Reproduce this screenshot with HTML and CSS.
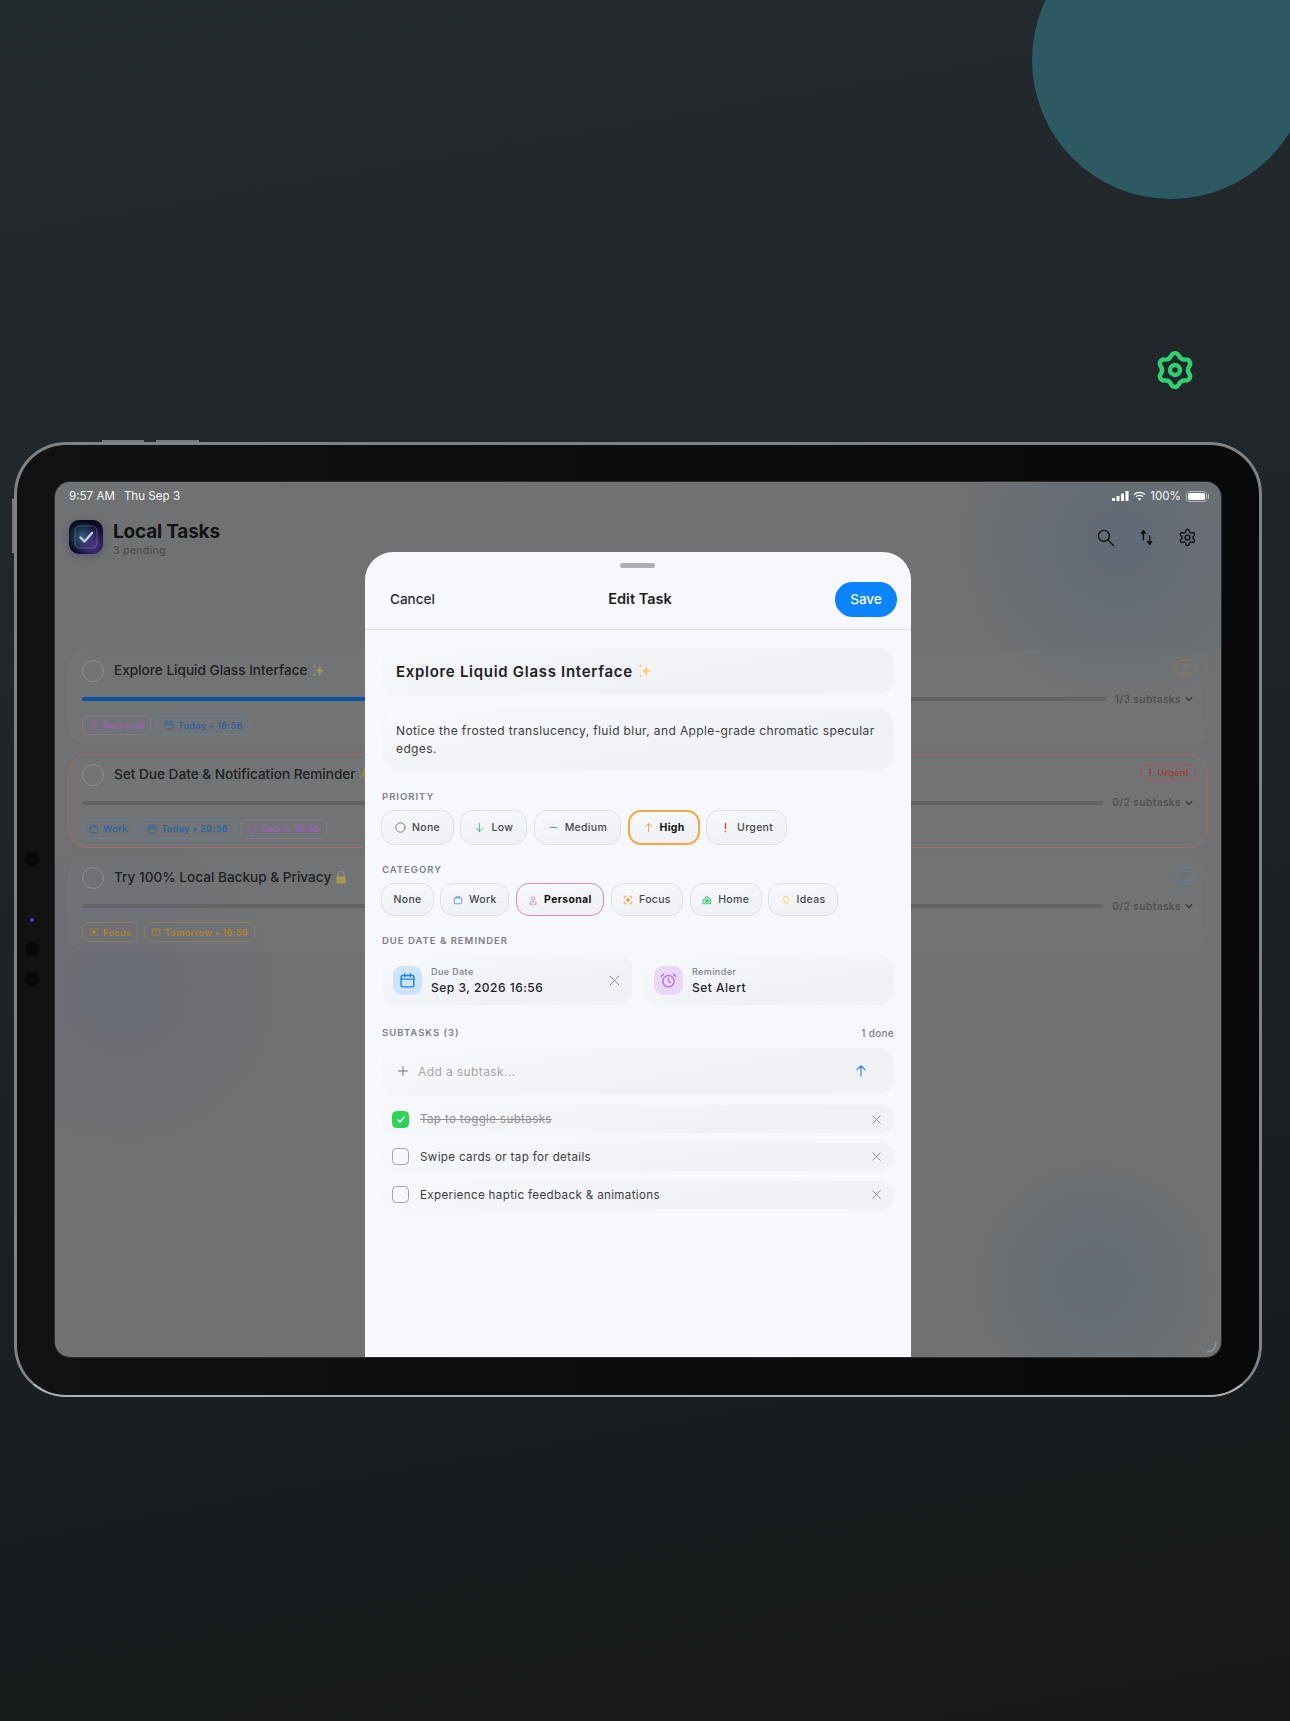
FILE: index.html
```html
<!DOCTYPE html>
<html lang="en">
<head>
    <meta charset="UTF-8">
    <meta name="viewport" content="width=device-width, initial-scale=1.0">
    <title>Local Tasks</title>
    <link rel="stylesheet" href="styles.css">
</head>
<body>
    <svg class="sprite" xmlns="http://www.w3.org/2000/svg">
        <symbol id="i-cal" viewBox="0 0 24 24"><rect x="3" y="5" width="18" height="16" rx="2"/><path d="M3 10h18M8 2.500v4M16 2.500v4"/></symbol>
        <symbol id="i-work" viewBox="0 0 24 24"><rect x="3" y="7" width="18" height="14" rx="2"/><path d="M8 7V4h8v3"/></symbol>
        <symbol id="i-user" viewBox="0 0 24 24"><circle cx="12" cy="8" r="4"/><path d="M4 21c0-4 3-6 8-6s8 2 8 6z"/></symbol>
        <symbol id="i-focus" viewBox="0 0 24 24"><path d="M3 8V3h5M16 3h5v5M21 16v5h-5M8 21H3v-5"/><circle cx="12" cy="12" r="3.500" fill="currentColor"/></symbol>
        <symbol id="i-alarm" viewBox="0 0 24 24"><circle cx="12" cy="13" r="8"/><path d="M12 9v4l2.500 2M5 3 2 6M19 3l3 3"/></symbol>
        <symbol id="i-x" viewBox="0 0 24 24"><path d="M5 5l14 14M19 5 5 19"/></symbol>
        <symbol id="i-up" viewBox="0 0 24 24"><path d="M12 21V3M5 10l7-7 7 7"/></symbol>
        <symbol id="i-down" viewBox="0 0 24 24"><path d="M12 3v18M5 14l7 7 7-7"/></symbol>
        <symbol id="i-chev" viewBox="0 0 24 24"><path d="M5 8l7 8 7-8"/></symbol>
        <symbol id="i-spark" viewBox="0 0 24 24"><path d="M14 3c1 6 2.500 8 8 9-5.500 1-7 3-8 9-1-6-2.500-8-8-9 5.500-1 7-3 8-9z"/><path d="M5 2c.4 2 1 2.600 3 3-2 .4-2.600 1-3 3-.4-2-1-2.600-3-3 2-.4 2.600-1 3-3zM5 16c.4 2 1 2.600 3 3-2 .4-2.600 1-3 3-.4-2-1-2.600-3-3 2-.4 2.600-1 3-3z"/></symbol>
    </svg>

    <div class="blob"></div>
    <svg class="green-gear" viewBox="0 0 40 40">
        <path d="M16.370 5.450A4 4 0 0 1 23.630 5.450A7 7 0 0 0 30.790 9.580A4 4 0 0 1 34.420 15.870A7 7 0 0 0 34.420 24.130A4 4 0 0 1 30.790 30.420A7 7 0 0 0 23.630 34.550A4 4 0 0 1 16.370 34.550A7 7 0 0 0 9.210 30.420A4 4 0 0 1 5.580 24.130A7 7 0 0 0 5.580 15.870A4 4 0 0 1 9.210 9.580A7 7 0 0 0 16.370 5.450Z"/>
        <circle cx="20" cy="20" r="5"/>
    </svg>

    <div class="device">
        <span class="side side-top1"></span>
        <span class="side side-top2"></span>
        <span class="side side-left"></span>
        <span class="sensor sensor-1"></span>
        <span class="sensor sensor-cam"></span>
        <span class="sensor sensor-2"></span>
        <span class="sensor sensor-3"></span>

        <div class="screen">
            <div class="statusbar">
                <div class="status-left"><span>9:57 AM</span><span>Thu Sep 3</span></div>
                <div class="status-right">
                    <svg class="signal" viewBox="0 0 17 10"><rect x="0" y="7" width="3" height="3" rx=".5"/><rect x="4.500" y="5" width="3" height="5" rx=".5"/><rect x="9" y="2.500" width="3" height="7.500" rx=".5"/><rect x="13.500" y="0" width="3" height="10" rx=".5"/></svg>
                    <svg class="wifi" viewBox="0 0 14 10"><path d="M1 3.500C4.500 .3 9.500 .3 13 3.500M3.200 5.800C5.300 4 8.700 4 10.800 5.800" fill="none" stroke="#fff" stroke-width="1.400"/><path d="M5 7.800c1.200-1 2.800-1 4 0L7 10z" fill="#fff"/></svg>
                    <span>100%</span>
                    <span class="battery"><span></span></span>
                </div>
            </div>

            <header class="app-header">
                <div class="app-icon">
                    <svg viewBox="0 0 34 34"><rect x="6" y="6" width="22" height="22" rx="5" fill="none" stroke="#7d8aa8" stroke-opacity=".5"/><path d="M11.500 17.500l4 4 7.500-8.500" fill="none" stroke="#c9ced6" stroke-width="2.400" stroke-linecap="round" stroke-linejoin="round"/></svg>
                </div>
                <div class="app-title">
                    <h1>Local Tasks</h1>
                    <p>3 pending</p>
                </div>
                <div class="app-actions">
                    <svg viewBox="0 0 24 24"><circle cx="10" cy="10" r="7"/><path d="M15.500 15.500 22 22"/></svg>
                    <svg viewBox="0 0 24 24"><path d="M8 6v9M16 10v8"/><path class="solid" d="M5 6.500 8 2.500l3 4zM13 17.500l3 4 3-4z"/></svg>
                    <svg viewBox="0 0 24 24"><path d="M12.220 2h-.44a2 2 0 0 0-2 2v.18a2 2 0 0 1-1 1.730l-.43.25a2 2 0 0 1-2 0l-.15-.08a2 2 0 0 0-2.730.73l-.22.38a2 2 0 0 0 .73 2.730l.15.1a2 2 0 0 1 1 1.720v.51a2 2 0 0 1-1 1.740l-.15.09a2 2 0 0 0-.73 2.730l.22.38a2 2 0 0 0 2.730.73l.15-.08a2 2 0 0 1 2 0l.43.25a2 2 0 0 1 1 1.730V20a2 2 0 0 0 2 2h.44a2 2 0 0 0 2-2v-.18a2 2 0 0 1 1-1.730l.43-.25a2 2 0 0 1 2 0l.15.08a2 2 0 0 0 2.730-.73l.22-.39a2 2 0 0 0-.73-2.730l-.15-.08a2 2 0 0 1-1-1.740v-.5a2 2 0 0 1 1-1.740l.15-.09a2 2 0 0 0 .73-2.730l-.22-.38a2 2 0 0 0-2.730-.73l-.15.08a2 2 0 0 1-2 0l-.43-.25a2 2 0 0 1-1-1.730V4a2 2 0 0 0-2-2z"/><circle cx="12" cy="12" r="3"/></svg>
                </div>
            </header>

            <div class="task-list">
                <div class="task">
                    <div class="task-top">
                        <span class="circle"></span>
                        <span class="task-title">Explore Liquid Glass Interface <svg class="emoji spark"><use href="#i-spark"/></svg></span>
                        <span class="prio prio-high"><svg class="ic"><use href="#i-up"/></svg></span>
                    </div>
                    <div class="task-progress">
                        <div class="track"><div class="fill" style="width:33.3%"></div></div>
                        <span class="count">1/3 subtasks <svg class="ic"><use href="#i-chev"/></svg></span>
                    </div>
                    <div class="tags">
                        <span class="tag t-purple"><svg class="ic"><use href="#i-user"/></svg>Personal</span>
                        <span class="tag t-blue"><svg class="ic"><use href="#i-cal"/></svg>Today • 16:56</span>
                    </div>
                </div>
                <div class="task task-urgent">
                    <div class="task-top">
                        <span class="circle"></span>
                        <span class="task-title">Set Due Date &amp; Notification Reminder <svg class="emoji" viewBox="0 0 12 14"><path d="M6 1c-2.500 0-3.500 2-3.500 4.500 0 2.500-1 3.500-1.500 4.500h10c-.5-1-1.500-2-1.500-4.500C9.500 3 8.500 1 6 1zM4.500 11.500a1.500 1.500 0 0 0 3 0z" fill="#9c8436"/></svg></span>
                        <span class="prio prio-urgent"><b>!</b>Urgent</span>
                    </div>
                    <div class="task-progress">
                        <div class="track"></div>
                        <span class="count">0/2 subtasks <svg class="ic"><use href="#i-chev"/></svg></span>
                    </div>
                    <div class="tags">
                        <span class="tag t-blue"><svg class="ic"><use href="#i-work"/></svg>Work</span>
                        <span class="tag t-blue"><svg class="ic"><use href="#i-cal"/></svg>Today • 20:56</span>
                        <span class="tag t-purple"><svg class="ic"><use href="#i-alarm"/></svg>Sep 3, 18:56</span>
                    </div>
                </div>
                <div class="task">
                    <div class="task-top">
                        <span class="circle"></span>
                        <span class="task-title">Try 100% Local Backup &amp; Privacy <svg class="emoji" viewBox="0 0 12 14"><path d="M3 7V4.500a3 3 0 0 1 6 0V7" fill="none" stroke="#8a8a86" stroke-width="1.200"/><rect x="1.500" y="6.500" width="9" height="7" rx="1.200" fill="#a39a55"/></svg></span>
                        <span class="prio prio-med"><svg class="ic" viewBox="0 0 24 24"><path d="M6 12h12"/></svg></span>
                    </div>
                    <div class="task-progress">
                        <div class="track"></div>
                        <span class="count">0/2 subtasks <svg class="ic"><use href="#i-chev"/></svg></span>
                    </div>
                    <div class="tags">
                        <span class="tag t-orange"><svg class="ic"><use href="#i-focus"/></svg>Focus</span>
                        <span class="tag t-orange"><svg class="ic"><use href="#i-cal"/></svg>Tomorrow • 16:56</span>
                    </div>
                </div>
            </div>

            <svg class="corner-arc" viewBox="0 0 16 16"><path d="M13 3c0 6-3.500 9.500-9 10" fill="none" stroke="#9a9c9d" stroke-width="1.200"/></svg>

            <div class="sheet">
                <div class="handle"></div>
                <div class="sheet-head">
                    <span class="cancel">Cancel</span>
                    <span class="sheet-title">Edit Task</span>
                    <span class="save">Save</span>
                </div>
                <div class="sheet-body">
                    <div class="field field-title">Explore Liquid Glass Interface <svg class="emoji spark-big"><use href="#i-spark"/></svg></div>
                    <div class="field field-desc">Notice the frosted translucency, fluid blur, and Apple-grade chromatic specular edges.</div>

                    <div class="label">PRIORITY</div>
                    <div class="chips">
                        <span class="chip"><svg class="ic c-gray" viewBox="0 0 14 14"><circle cx="7" cy="7" r="6"/></svg>None</span>
                        <span class="chip"><svg class="ic c-green"><use href="#i-down"/></svg>Low</span>
                        <span class="chip"><svg class="ic c-blue" viewBox="0 0 24 24"><path d="M5 12h14"/></svg>Medium</span>
                        <span class="chip chip-high"><svg class="ic c-orange"><use href="#i-up"/></svg>High</span>
                        <span class="chip"><svg class="ic c-red" viewBox="0 0 24 24"><path d="M12 3v11M12 20v1"/></svg>Urgent</span>
                    </div>

                    <div class="label">CATEGORY</div>
                    <div class="chips chips-cat">
                        <span class="chip">None</span>
                        <span class="chip"><svg class="ic c-blue"><use href="#i-work"/></svg>Work</span>
                        <span class="chip chip-personal"><svg class="ic c-purple"><use href="#i-user"/></svg>Personal</span>
                        <span class="chip"><svg class="ic c-orange"><use href="#i-focus"/></svg>Focus</span>
                        <span class="chip"><svg class="ic c-green" viewBox="0 0 24 24"><path d="M3 11l9-8 9 8v10H3z" fill="#a5e6bd"/><circle cx="12" cy="14" r="2.500" fill="currentColor"/></svg>Home</span>
                        <span class="chip"><svg class="ic c-yellow" viewBox="0 0 24 24"><path d="M9 17c0-2-3-4-3-8a6 6 0 0 1 12 0c0 4-3 6-3 8zM10 21h4"/></svg>Ideas</span>
                    </div>

                    <div class="label">DUE DATE &amp; REMINDER</div>
                    <div class="when">
                        <div class="when-box">
                            <span class="when-icon wi-blue"><svg class="ic"><use href="#i-cal"/></svg></span>
                            <div class="when-text"><small>Due Date</small><strong>Sep 3, 2026 16:56</strong></div>
                            <svg class="ic when-x"><use href="#i-x"/></svg>
                        </div>
                        <div class="when-box">
                            <span class="when-icon wi-purple"><svg class="ic"><use href="#i-alarm"/></svg></span>
                            <div class="when-text"><small>Reminder</small><strong>Set Alert</strong></div>
                        </div>
                    </div>

                    <div class="sub-head">
                        <div class="label">SUBTASKS (3)</div>
                        <span class="sub-done">1 done</span>
                    </div>
                    <div class="sub-input">
                        <svg class="ic plus" viewBox="0 0 24 24"><path d="M12 3v18M3 12h18"/></svg>
                        <span>Add a subtask...</span>
                        <svg class="ic send"><use href="#i-up"/></svg>
                    </div>
                    <div class="sub-row is-done">
                        <span class="check"><svg viewBox="0 0 12 12"><path d="M2.500 6.500l2.500 2.500 4.500-5.500"/></svg></span>
                        <span class="sub-text">Tap to toggle subtasks</span>
                        <svg class="ic sub-x"><use href="#i-x"/></svg>
                    </div>
                    <div class="sub-row">
                        <span class="check"></span>
                        <span class="sub-text">Swipe cards or tap for details</span>
                        <svg class="ic sub-x"><use href="#i-x"/></svg>
                    </div>
                    <div class="sub-row">
                        <span class="check"></span>
                        <span class="sub-text">Experience haptic feedback &amp; animations</span>
                        <svg class="ic sub-x"><use href="#i-x"/></svg>
                    </div>
                </div>
            </div>
        </div>
    </div>
</body>
</html>
```

FILE: styles.css
```css
*{
    margin: 0;
    padding: 0;
    box-sizing: border-box;
}
html, body{
    height: 1721px;
}
body{
    position: relative;
    overflow: hidden;
    padding: 442px 0 0 14px;
    font-family: Inter, "Noto Sans", sans-serif;
    background: linear-gradient(170deg, #242b2f 0%, #1f2529 40%, #161819 100%);
}
.sprite{
    display: none;
}
.ic{
    width: 12px;
    height: 12px;
    flex: none;
    fill: none;
    stroke: currentColor;
    stroke-width: 2;
    stroke-linecap: round;
    stroke-linejoin: round;
}

/* backdrop */
.blob{
    position: absolute;
    left: 1032px;
    top: -79px;
    width: 278px;
    height: 278px;
    border-radius: 50%;
    background: #2d5a62;
}
.green-gear{
    position: absolute;
    left: 1155px;
    top: 350px;
    width: 40px;
    height: 40px;
    fill: none;
    stroke: #30cf70;
    stroke-width: 4.4;
}

/* device */
.device{
    position: relative;
    width: 1248px;
    height: 955px;
    padding: 37px 38px 38px;
    border: 3px solid #808285;
    border-bottom: 2px solid #adafb1;
    border-radius: 52px;
    background: linear-gradient(90deg, #121212 0%, #0d0d0d 50%, #090909 100%);
}
.side{
    position: absolute;
    background: #76787b;
}
.side-top1{
    left: 85px;
    top: -5px;
    width: 42px;
    height: 2px;
}
.side-top2{
    left: 139px;
    top: -5px;
    width: 43px;
    height: 2px;
}
.side-left{
    left: -5px;
    top: 54px;
    width: 2px;
    height: 54px;
}
.sensor{
    position: absolute;
    left: 8px;
    width: 14px;
    height: 14px;
    border-radius: 50%;
    background: #080808;
}
.sensor-1{
    top: 407px;
}
.sensor-2{
    top: 497px;
}
.sensor-3{
    top: 527px;
}
.sensor-cam{
    top: 473px;
    left: 13px;
    width: 4px;
    height: 4px;
    background: #3f3eb0;
}
.screen{
    position: relative;
    height: 875px;
    overflow: hidden;
    border-radius: 15px;
    box-shadow: 0 0 0 1px #2c2c2c;
    background:
        radial-gradient(circle 170px at 1065px 60px, #5f6a75 0%, rgba(95,106,117,0) 100%),
        radial-gradient(circle 130px at 1040px 800px, #616c75 0%, rgba(97,108,117,0) 100%),
        radial-gradient(circle 170px at 70px 510px, #6b6d76 0%, rgba(107,109,118,0) 100%),
        #707172;
}

/* status bar */
.statusbar{
    display: flex;
    justify-content: space-between;
    align-items: center;
    height: 28px;
    padding: 0 12px 0 14px;
    color: #f4f4f4;
    font-size: 11.600px;
}
.status-left{
    display: flex;
    gap: 9px;
}
.status-right{
    display: flex;
    align-items: center;
    gap: 4px;
}
.signal{
    width: 17px;
    height: 10px;
    fill: #fff;
}
.wifi{
    width: 13px;
    height: 10px;
}
.battery{
    position: relative;
    display: block;
    width: 21px;
    height: 11px;
    margin-left: 1px;
    margin-right: 2px;
    padding: 1px;
    border: 1px solid #b7b8b9;
    border-radius: 3.500px;
}
.battery span{
    display: block;
    height: 100%;
    border-radius: 2px;
    background: #fff;
}
.battery::after{
    content: "";
    position: absolute;
    right: -3px;
    top: 2px;
    width: 1.500px;
    height: 5px;
    border-radius: 1px;
    background: #b7b8b9;
}

/* app header */
.app-header{
    display: flex;
    align-items: flex-start;
    margin-top: 10px;
    padding: 0 24px 0 14px;
}
.app-icon{
    width: 34px;
    height: 34px;
    border-radius: 10px;
    background:
        radial-gradient(circle at 72% 75%, #4a3488 0%, rgba(74,52,136,0) 55%),
        radial-gradient(circle at 40% 50%, #28697a 0%, rgba(40,105,122,0) 60%),
        #0c0922;
    box-shadow: 0 2px 7px rgba(60,60,110,.45);
}
.app-icon svg{
    display: block;
    width: 34px;
    height: 34px;
}
.app-title{
    margin-left: 10px;
}
.app-title h1{
    margin-top: -1px;
    color: #111214;
    font-size: 19px;
    font-weight: 700;
    letter-spacing: -.2px;
    line-height: 25px;
}
.app-title p{
    color: #4c4d4f;
    font-size: 10.500px;
    font-weight: 500;
    letter-spacing: .3px;
    line-height: 14px;
}
.app-actions{
    display: flex;
    gap: 22px;
    margin-left: auto;
    padding-top: 8px;
}
.app-actions svg{
    width: 19px;
    height: 19px;
    fill: none;
    stroke: #111214;
    stroke-width: 1.800;
    stroke-linecap: round;
    stroke-linejoin: round;
}
.app-actions .solid{
    fill: #111214;
    stroke-width: 1;
}

/* tasks behind the sheet */
.task-list{
    display: flex;
    flex-direction: column;
    gap: 9.500px;
    margin: 92px 13px 0;
}
.task{
    height: 94px;
    padding: 9px 13px;
    border: 1px solid rgba(255,255,255,.015);
    border-radius: 20px;
    background: rgba(255,255,255,.018);
}
.task-urgent{
    border-color: #a4696a;
}
.task-top{
    display: flex;
    align-items: flex-start;
    height: 22px;
}
.circle{
    width: 22px;
    height: 22px;
    flex: none;
    border: 1.500px solid #8b8c8e;
    border-radius: 50%;
}
.task-title{
    display: flex;
    align-items: center;
    gap: 4px;
    margin-left: 10px;
    color: #202124;
    font-size: 13.600px;
    font-weight: 500;
    line-height: 20px;
    white-space: nowrap;
}
.emoji{
    width: 12px;
    height: 14px;
}
.spark{
    width: 15px;
    height: 15px;
    fill: #9e9660;
}
.prio{
    display: flex;
    align-items: center;
    justify-content: center;
    margin-left: auto;
    margin-right: -2px;
    border: 1px solid;
    border-radius: 7px;
}
.prio-high{
    width: 22px;
    height: 14px;
    color: #9d7f3d;
    border-color: #8c7a50;
}
.prio-high .ic{
    width: 8px;
    height: 8px;
}
.prio-med{
    width: 22px;
    height: 14px;
    color: #56718f;
    border-color: #627e9c;
}
.prio-urgent{
    gap: 5px;
    height: 17px;
    padding: 0 6px 0 8px;
    border-radius: 9px;
    border-color: #a4595a;
    color: #a63a3b;
    font-size: 9px;
    font-weight: 600;
    letter-spacing: .3px;
}
.task-progress{
    display: flex;
    align-items: center;
    margin-top: 10px;
    height: 14px;
}
.track{
    flex: 1;
    height: 4px;
    border-radius: 2px;
    background: #636465;
}
.fill{
    height: 4px;
    border-radius: 2px;
    background: #0b57a3;
}
.count{
    display: flex;
    align-items: center;
    gap: 3px;
    margin-left: 9px;
    color: #4d4e50;
    font-size: 10.500px;
    font-weight: 500;
    letter-spacing: .3px;
}
.count .ic{
    width: 10px;
    height: 10px;
    color: #2e2f31;
    stroke-width: 2.600;
}
.tags{
    display: flex;
    gap: 5.500px;
    margin-top: 9px;
}
.tag{
    display: flex;
    align-items: center;
    gap: 4px;
    height: 20px;
    padding: 0 6px;
    border: 1px solid;
    border-radius: 7px;
    font-size: 9px;
    font-weight: 600;
    letter-spacing: .4px;
}
.tag .ic{
    width: 10px;
    height: 10px;
    stroke-width: 2;
}
.t-purple{
    color: #9c5fc0;
    border-color: #84788c;
}
.t-blue{
    color: #2a66a8;
    border-color: #637e97;
}
.t-orange{
    color: #b08428;
    border-color: #8d7c5b;
}
.corner-arc{
    position: absolute;
    right: 2px;
    bottom: 2px;
    width: 16px;
    height: 16px;
}

/* edit sheet */
.sheet{
    position: absolute;
    left: 310px;
    right: 310px;
    top: 70px;
    bottom: 0;
    border-radius: 28px 28px 0 0;
    background: #f7f8fd;
}
.handle{
    position: absolute;
    left: 255px;
    top: 11px;
    width: 35px;
    height: 5px;
    border-radius: 3px;
    background: #aeafb3;
}
.sheet-head{
    position: relative;
    display: flex;
    justify-content: space-between;
    align-items: center;
    height: 78px;
    padding: 17px 14px 0 25px;
    border-bottom: 1px solid #dfe0e5;
}
.cancel{
    color: #2a2b2e;
    font-size: 13.500px;
    font-weight: 500;
}
.sheet-title{
    position: absolute;
    left: 4px;
    right: 0;
    top: 38px;
    color: #1c1c1f;
    font-size: 14.500px;
    font-weight: 600;
    line-height: 18px;
    text-align: center;
}
.save{
    display: flex;
    align-items: center;
    justify-content: center;
    width: 62px;
    height: 35px;
    border-radius: 18px;
    background: #0a84ff;
    color: #fff;
    font-size: 13.500px;
    font-weight: 500;
}
.sheet-body{
    padding: 17px 17px 0;
}
.field{
    border: 1px solid #f5f6fa;
    background: linear-gradient(170deg, #f8f9fc 0%, #f0f1f4 70%, #f1f2f5 100%);
}
.field-title{
    display: flex;
    align-items: center;
    gap: 4px;
    height: 48px;
    padding: 0 13px;
    border-radius: 16px;
    color: #1f2023;
    font-size: 15px;
    font-weight: 600;
    letter-spacing: .7px;
}
.spark-big{
    width: 16px;
    height: 16px;
    fill: #f2d479;
}
.field-desc{
    height: 63px;
    margin-top: 13px;
    padding: 13px 13px;
    border-radius: 16px;
    color: #3c3d41;
    font-size: 12px;
    letter-spacing: .38px;
    line-height: 18px;
}
.label{
    height: 12px;
    margin-top: 20px;
    color: #7d7e82;
    font-size: 9.500px;
    font-weight: 600;
    letter-spacing: 1px;
    line-height: 12px;
}
.chips{
    display: flex;
    gap: 6.500px;
    margin: 7px 0 0 -1px;
}
.chips + .label{
    margin-top: 19px;
}
.chip{
    display: flex;
    align-items: center;
    gap: 6px;
    height: 35px;
    padding: 0 13px;
    border: 1px solid #e2e3e8;
    border-radius: 13px;
    background: linear-gradient(170deg, #f8f9fc 0%, #eff0f3 100%);
    color: #46474b;
    font-size: 10.500px;
    font-weight: 500;
    letter-spacing: .3px;
}
.chip .ic{
    width: 11px;
    height: 11px;
}
.chips-cat .chip{
    height: 33px;
    padding: 0 11.500px;
}
.chips-cat .ic{
    width: 10px;
    height: 10px;
}
.chip-high{
    border: 2px solid #f3a93f;
    color: #111;
    font-weight: 700;
}
.chips .chip-personal{
    border: 1.500px solid #c48be6;
    color: #111;
    font-weight: 700;
}
.c-gray{
    color: #77787c;
    stroke-width: 1.200;
}
.c-green{
    color: #34c770;
}
.c-blue{
    color: #3b95f5;
}
.c-orange{
    color: #f3a041;
}
.c-red{
    color: #ec3c3a;
    stroke-width: 3;
}
.c-purple{
    color: #bb82de;
}
.c-yellow{
    color: #f5d24c;
}
.when{
    display: grid;
    grid-template-columns: 1fr 1fr;
    gap: 10px;
    margin-top: 7px;
}
.when-box{
    display: flex;
    align-items: center;
    height: 52px;
    padding: 0 10px;
    border: 1px solid #f5f6fa;
    border-radius: 16px;
    background: linear-gradient(170deg, #f8f9fc 0%, #f0f1f4 70%, #f1f2f5 100%);
}
.when-icon{
    display: flex;
    align-items: center;
    justify-content: center;
    width: 29px;
    height: 29px;
    border-radius: 9px;
}
.when-icon .ic{
    width: 17px;
    height: 17px;
}
.wi-blue{
    background: #cfe4fa;
    color: #0a84ff;
}
.wi-purple{
    background: #ead9f6;
    color: #b778e0;
}
.when-text{
    margin-left: 9px;
}
.when-text small{
    display: block;
    color: #808186;
    font-size: 9px;
    font-weight: 500;
    letter-spacing: .4px;
    line-height: 13px;
}
.when-text strong{
    display: block;
    margin-top: 2px;
    color: #222327;
    font-size: 12px;
    font-weight: 500;
    letter-spacing: .5px;
    line-height: 16px;
}
.when-x{
    width: 15px;
    height: 15px;
    margin-left: auto;
    color: #8a8b90;
    stroke-width: 1.500;
}
.sub-head{
    display: flex;
    justify-content: space-between;
    align-items: center;
    margin-top: 21px;
}
.sub-head .label{
    margin-top: 0;
}
.sub-done{
    color: #808186;
    font-size: 10px;
    font-weight: 500;
    letter-spacing: .3px;
    line-height: 12px;
}
.sub-input{
    display: flex;
    align-items: center;
    height: 48px;
    margin-top: 8px;
    padding: 0 25px 0 14px;
    border: 1px solid #f5f6fa;
    border-radius: 16px;
    background: linear-gradient(170deg, #f8f9fc 0%, #f0f1f4 70%, #f1f2f5 100%);
    color: #a5a6aa;
    font-size: 12px;
    letter-spacing: .4px;
}
.sub-input span{
    margin-left: 9px;
}
.plus{
    color: #66676b;
    stroke-width: 1.800;
}
.send{
    width: 14px;
    height: 14px;
    margin-left: auto;
    color: #2e8bf0;
}
.sub-row{
    display: flex;
    align-items: center;
    height: 30px;
    margin-top: 7.800px;
    padding: 0 10px 0 9px;
    border: 1px solid #f5f6fa;
    border-radius: 13px;
    background: linear-gradient(170deg, #f8f9fc 0%, #f0f1f4 70%, #f1f2f5 100%);
}
.sub-input + .sub-row{
    margin-top: 9px;
}
.check{
    display: flex;
    align-items: center;
    justify-content: center;
    width: 17px;
    height: 17px;
    border: 1.400px solid #a0a1a6;
    border-radius: 4.500px;
}
.check svg{
    width: 12px;
    height: 12px;
    fill: none;
    stroke: #fff;
    stroke-width: 1.300;
}
.is-done .check{
    border-color: #30d158;
    background: #30d158;
}
.sub-text{
    margin-left: 11px;
    color: #3c3d41;
    font-size: 11.600px;
    letter-spacing: .35px;
}
.is-done .sub-text{
    color: #8f9095;
    text-decoration: line-through;
}
.sub-x{
    width: 13px;
    height: 13px;
    margin-left: auto;
    color: #808186;
    stroke-width: 1.600;
}
```
